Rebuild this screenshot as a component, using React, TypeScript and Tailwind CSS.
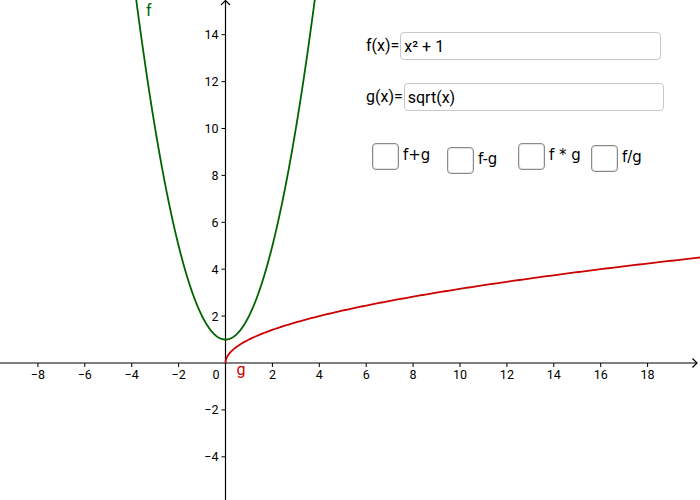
import { useState } from 'react';

// graph window: origin at (225.5, 363), 23.45 px per unit on both axes
const OX = 225.5;
const OY = 363;
const S = 23.45;

const px = (x: number) => OX + x * S;
const py = (y: number) => OY - y * S;

function pathFor(fn: (x: number) => number, from: number, to: number, step: number) {
  const pts: string[] = [];
  for (let x = from; x <= to + 1e-9; x += step) {
    pts.push(`${px(x).toFixed(2)},${py(fn(x)).toFixed(2)}`);
  }
  return 'M' + pts.join(' L');
}

const xTicks = [-8, -6, -4, -2, 2, 4, 6, 8, 10, 12, 14, 16, 18];
const yTicks = [-4, -2, 2, 4, 6, 8, 10, 12, 14];

const label = (n: number) => (n < 0 ? `\u2212${-n}` : `${n}`);

function Graph() {
  const fPath = pathFor((x) => x * x + 1, -3.85, 3.85, 0.02);
  // sqrt gets steep near 0, so walk along y instead of x
  const gPts: string[] = [];
  for (let t = 0; t <= Math.sqrt(20.3) + 1e-9; t += 0.02) {
    const x = t * t;
    gPts.push(`${px(x).toFixed(2)},${py(t).toFixed(2)}`);
  }
  const gPath = 'M' + gPts.join(' L');

  return (
    <svg width="700" height="500" viewBox="0 0 700 500" className="block">
      <rect width="700" height="500" fill="#ffffff" />
      {/* axes */}
      <line x1="0" y1={OY} x2="697" y2={OY} stroke="#000" strokeWidth="1.2" />
      <polyline points={`692.5,358.5 697,${OY} 692.5,367.5`} fill="none" stroke="#000" strokeWidth="1.2" />
      <line x1={OX} y1="0.5" x2={OX} y2="500" stroke="#000" strokeWidth="1.2" />
      <polyline points={`${OX - 4.5},5 ${OX},0.5 ${OX + 4.5},5`} fill="none" stroke="#000" strokeWidth="1.2" />

      {xTicks.map((t) => (
        <g key={`x${t}`}>
          <line x1={px(t)} y1={OY} x2={px(t)} y2={OY + 4} stroke="#000" strokeWidth="1" />
          <text
            x={px(t)}
            y={OY + 15.5}
            textAnchor="middle"
            fontFamily="Roboto, 'Liberation Sans', sans-serif"
            fontSize="12.5"
            fill="#000"
          >
            {label(t)}
          </text>
        </g>
      ))}
      {yTicks.map((t) => (
        <g key={`y${t}`}>
          <line x1={OX - 4} y1={py(t)} x2={OX} y2={py(t)} stroke="#000" strokeWidth="1" />
          <text
            x={OX - 7}
            y={py(t) + 4.5}
            textAnchor="end"
            fontFamily="Roboto, 'Liberation Sans', sans-serif"
            fontSize="12.5"
            fill="#000"
          >
            {label(t)}
          </text>
        </g>
      ))}
      <text x={OX - 6} y={OY + 15.5} textAnchor="end" fontFamily="Roboto, 'Liberation Sans', sans-serif" fontSize="12.5" fill="#000">
        0
      </text>

      {/* curves */}
      <path d={fPath} fill="none" stroke="#006400" strokeWidth="1.8" strokeLinejoin="round" />
      <path d={gPath} fill="none" stroke="#cc0000" strokeWidth="1.8" strokeLinejoin="round" />
      <text x="146" y="16" fontFamily="Roboto, 'Liberation Sans', sans-serif" fontSize="16" fill="#006400">
        f
      </text>
      <text x="236.5" y="375" fontFamily="Roboto, 'Liberation Sans', sans-serif" fontSize="16" fill="#cc0000">
        g
      </text>
    </svg>
  );
}

function Box({ checked, onClick }: { checked: boolean; onClick: () => void }) {
  return (
    <button
      onClick={onClick}
      className="w-[27px] h-[27px] rounded-[4px] border border-[#8a8a8a] bg-white flex items-center justify-center shadow-[inset_0_0_0_1px_#e4e4e4]"
    >
      {checked && (
        <svg width="16" height="16" viewBox="0 0 16 16">
          <path d="M3 8.5l3.2 3.2L13 4.5" fill="none" stroke="#333" strokeWidth="2" />
        </svg>
      )}
    </button>
  );
}

export default function App() {
  const [f, setF] = useState('x² + 1');
  const [g, setG] = useState('sqrt(x)');
  const [checks, setChecks] = useState([false, false, false, false]);
  const toggle = (i: number) => setChecks((c) => c.map((v, j) => (j === i ? !v : v)));

  const boxes = [
    { name: 'f+g', cls: 'left-[372px] top-[143px]' },
    { name: 'f-g', cls: 'left-[447px] top-[147px]' },
    { name: 'f * g', cls: 'left-[518px] top-[143px]' },
    { name: 'f/g', cls: 'left-[591px] top-[145px]' },
  ];

  return (
    <div className="relative w-[700px] h-[500px] overflow-hidden bg-white font-['Roboto','Liberation_Sans',sans-serif] text-black">
      <Graph />

      <div className="absolute left-[366px] top-[32px] flex items-center">
        <span className="text-[16px] leading-none">f(x)=</span>
        <input
          value={f}
          onChange={(e) => setF(e.target.value)}
          className="ml-[1px] w-[261px] h-[28px] rounded-[4px] border border-[#c8c8c8] bg-white px-[3px] text-[16px] outline-none"
        />
      </div>
      <div className="absolute left-[366px] top-[83px] flex items-center">
        <span className="text-[16px] leading-none">g(x)=</span>
        <input
          value={g}
          onChange={(e) => setG(e.target.value)}
          className="ml-[1px] w-[260px] h-[28px] rounded-[4px] border border-[#c8c8c8] bg-white px-[3px] text-[16px] outline-none"
        />
      </div>

      {boxes.map((b, i) => (
        <div key={b.name} className={`absolute flex items-center gap-[4px] ${b.cls}`}>
          <Box checked={checks[i]} onClick={() => toggle(i)} />
          <span className="text-[15px] leading-none font-['DejaVu_Sans',sans-serif] -mt-[2px]">{b.name}</span>
        </div>
      ))}
    </div>
  );
}
